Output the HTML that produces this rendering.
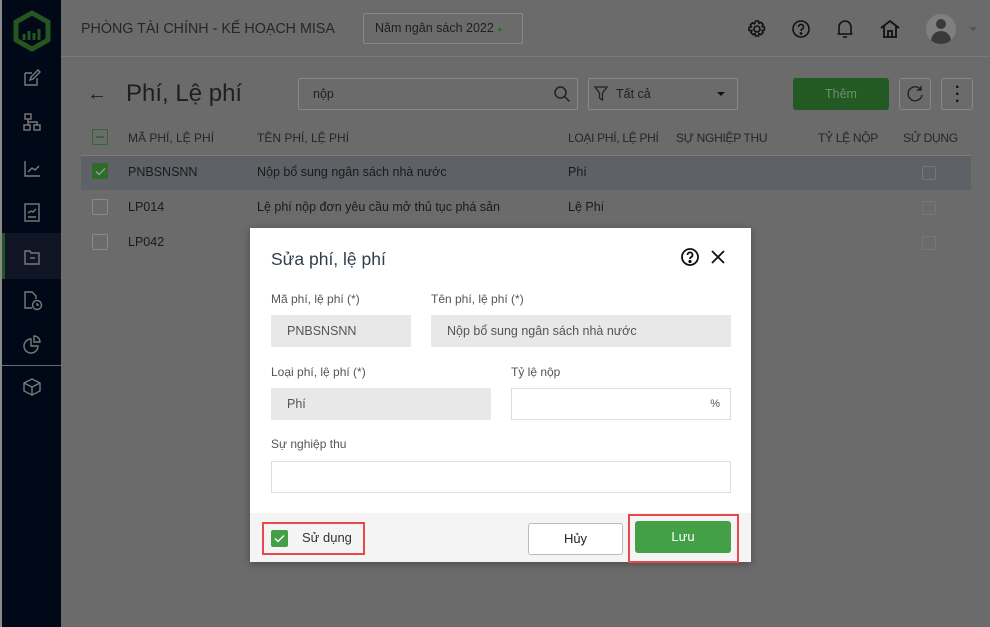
<!DOCTYPE html>
<html><head><meta charset="utf-8"><style>
*{margin:0;padding:0;box-sizing:border-box}
body{width:990px;height:627px;overflow:hidden;background:#6b6b6b;font-family:"Liberation Sans",Roboto,sans-serif;position:relative;color:#1f1f1f}
.abs{position:absolute}
.side{left:2px;top:0;width:59px;height:627px;background:#010818}
.ic{position:absolute;left:20px}
.hdr{left:61px;top:0;right:0;height:57px;border-bottom:1px solid #7a7a7a}
.t{position:absolute;white-space:nowrap}
.cb{position:absolute;width:16px;height:16px;border:1px solid #8a8a8a;border-radius:2px}
.th{font-size:12px;color:#262626}
.td{font-size:12.5px;color:#1a1a1a}
.dlg{left:250px;top:228px;width:501px;height:334px;background:#fff;box-shadow:0 2px 8px rgba(0,0,0,.3)}
.lbl{font-size:12px;color:#555}
.inp{position:absolute;height:32px;border:1px solid #ddd;font-size:12.5px;color:#555;padding-left:15px;line-height:30px}
.dis{background:#e8e8e8;border-color:#e8e8e8}
</style></head><body>
<div class="abs" style="left:0;top:0;width:2px;height:627px;background:#8a8a8a"></div>
<div class="abs side">
 <svg class="ic" style="left:9px;top:10px" width="42" height="42" viewBox="0 0 42 42"><path d="M21 3 L37 12 V30 L21 39 L5 30 V12 Z" fill="none" stroke="#24561f" stroke-width="5"/><path d="M13 30v-6M18 30v-9M23 30v-7M28 30v-11" stroke="#24561f" stroke-width="3"/></svg>
 <svg class="ic" style="top:68px" width="20" height="20" fill="none" stroke="#7a7a7a" stroke-width="1.4"><path d="M3 5h7M3 5v12h12v-7"/><path d="M8 12l1-3 7-7 2 2-7 7z"/></svg>
 <svg class="ic" style="top:112px" width="20" height="20" fill="none" stroke="#7a7a7a" stroke-width="1.4"><rect x="3" y="2" width="6" height="5"/><rect x="2" y="13" width="6" height="5"/><rect x="12" y="13" width="6" height="5"/><path d="M6 7v3h9v3M6 10v3"/></svg>
 <svg class="ic" style="top:158px" width="20" height="20" fill="none" stroke="#7a7a7a" stroke-width="1.4"><path d="M3 3v15h15M6 14l4-4 3 2 4-4"/></svg>
 <svg class="ic" style="top:202px" width="20" height="20" fill="none" stroke="#7a7a7a" stroke-width="1.4"><rect x="3" y="2" width="14" height="17"/><path d="M6 11l3-2 2 1 3-3M6 15h8"/></svg>
 <div class="abs" style="left:0;top:233px;width:59px;height:46px;background:#0f1524;border-left:3px solid #24561f"></div>
 <svg class="ic" style="top:246px" width="20" height="20" fill="none" stroke="#7a7a7a" stroke-width="1.4"><path d="M3 5h5l1 2h8v11H3z"/><path d="M8 12h5"/></svg>
 <svg class="ic" style="top:290px" width="22" height="22" fill="none" stroke="#7a7a7a" stroke-width="1.4"><path d="M10 18H3V2h7l4 4v3"/><circle cx="15" cy="15" r="4.5"/><path d="M15 13v2h2"/></svg>
 <svg class="ic" style="top:334px" width="20" height="20" fill="none" stroke="#7a7a7a" stroke-width="1.4"><path d="M9 5a7 7 0 1 0 7 7H9z"/><path d="M12 2a6 6 0 0 1 6 6h-6z"/></svg>
 <div class="abs" style="left:0;top:365px;width:59px;height:1px;background:#6a6a6a"></div>
 <svg class="ic" style="top:377px" width="20" height="20" fill="none" stroke="#7a7a7a" stroke-width="1.4"><path d="M10 2l8 4v8l-8 4-8-4V6z M2 6l8 4 8-4M10 10v8"/></svg>
</div>
<div class="abs hdr">
 <div class="t" style="left:20px;top:21px;font-size:14.3px;color:#262626">PHÒNG TÀI CHÍNH - KẾ HOẠCH MISA</div>
 <div class="abs" style="left:302px;top:13px;width:160px;height:31px;border:1px solid #888;border-radius:2px"></div>
 <div class="t" style="left:314px;top:21px;font-size:12.5px;color:#1f1f1f">Năm ngân sách 2022 <span style="color:#2f6b2a;font-size:8px">●</span></div>
 <svg class="abs" style="left:686px;top:19px" width="20" height="20" fill="none" stroke="#111" stroke-width="1.6"><circle cx="10" cy="10" r="3"/><path d="M8.5 2h3l.5 2.3 2-1 2.1 2.1-1 2 2.3.6v3l-2.3.5 1 2-2.1 2.1-2-1-.5 2.4h-3l-.5-2.4-2 1-2.1-2.1 1-2L2 11.5v-3l2.4-.6-1-2 2.1-2.1 2 1z"/></svg>
 <svg class="abs" style="left:730px;top:19px" width="20" height="20" fill="none" stroke="#111" stroke-width="1.6"><circle cx="10" cy="10" r="8"/><path d="M7.5 8a2.5 2.5 0 1 1 3.5 2.2c-.8.4-1 .9-1 1.8"/><circle cx="10" cy="14.5" r=".6" fill="#111"/></svg>
 <svg class="abs" style="left:774px;top:18px" width="20" height="22" fill="none" stroke="#111" stroke-width="1.6"><path d="M4 16V9a6 6 0 0 1 12 0v7zM2.5 16h15M8 19h4"/></svg>
 <svg class="abs" style="left:818px;top:18px" width="22" height="22" fill="none" stroke="#111" stroke-width="1.8"><path d="M2 10L11 3l9 7M5 8v11h12V8M9 19v-6h4v6"/></svg>
 <div class="abs" style="left:865px;top:14px;width:30px;height:30px;border-radius:50%;background:#7f7f7f;overflow:hidden"><div class="abs" style="left:10px;top:5px;width:10px;height:10px;border-radius:50%;background:#3a3a3a"></div><div class="abs" style="left:5px;top:17px;width:20px;height:14px;border-radius:10px 10px 0 0;background:#3a3a3a"></div></div>
 <div class="abs" style="left:908px;top:27px;border:4px solid transparent;border-top-color:#555"></div>
</div>
<div class="t" style="left:87px;top:83px;font-size:20px;color:#222">←</div>
<div class="t" style="left:126px;top:80px;font-size:24px;color:#1f1f1f">Phí, Lệ phí</div>
<div class="abs" style="left:298px;top:78px;width:280px;height:32px;border:1px solid #888;border-radius:2px"></div>
<div class="t" style="left:313px;top:87px;font-size:12.5px;color:#1f1f1f">nộp</div>
<svg class="abs" style="left:553px;top:85px" width="18" height="18" fill="none" stroke="#222" stroke-width="1.5"><circle cx="7.5" cy="7.5" r="5.5"/><path d="M11.5 11.5l5 5"/></svg>
<div class="abs" style="left:588px;top:78px;width:150px;height:32px;border:1px solid #888;border-radius:2px"></div>
<svg class="abs" style="left:594px;top:86px" width="14" height="16" fill="none" stroke="#222" stroke-width="1.3"><path d="M1 1h12L8.5 7v7L5.5 12V7z"/></svg>
<div class="t" style="left:616px;top:87px;font-size:12.5px;color:#1f1f1f">Tất cả</div>
<div class="abs" style="left:717px;top:92px;border:4px solid transparent;border-top-color:#111"></div>
<div class="abs" style="left:793px;top:78px;width:96px;height:32px;background:#235a23;border-radius:3px;color:#6f8e6f;font-size:12.5px;text-align:center;line-height:32px">Thêm</div>
<div class="abs" style="left:899px;top:78px;width:32px;height:32px;border:1px solid #888;border-radius:3px"></div>
<svg class="abs" style="left:905px;top:84px" width="20" height="20" fill="none" stroke="#222" stroke-width="1.4"><path d="M16 6A7 7 0 1 0 17 11M16 2v4h-4"/></svg>
<div class="abs" style="left:941px;top:78px;width:32px;height:32px;border:1px solid #888;border-radius:3px"></div>
<div class="t" style="left:955px;top:84px;font-size:16px;font-weight:bold;line-height:7px;color:#111">·<br>·<br>·</div>
<div class="cb" style="left:92px;top:129px;border-color:#2f6b2a"><div class="abs" style="left:3px;top:6px;width:8px;height:1.5px;background:#2f6b2a"></div></div>
<div class="t th" style="left:128px;top:131px">MÃ PHÍ, LỆ PHÍ</div>
<div class="t th" style="left:257px;top:131px">TÊN PHÍ, LỆ PHÍ</div>
<div class="t th" style="left:568px;top:131px;letter-spacing:-.3px">LOẠI PHÍ, LỆ PHÍ</div>
<div class="t th" style="left:676px;top:131px;letter-spacing:-.3px">SỰ NGHIỆP THU</div>
<div class="t th" style="left:818px;top:131px;letter-spacing:-.3px">TỶ LỆ NỘP</div>
<div class="t th" style="left:903px;top:131px;letter-spacing:-.3px">SỬ DỤNG</div>
<div class="abs" style="left:81px;top:155px;width:890px;height:1px;background:#7c7c7c"></div>
<div class="abs" style="left:81px;top:156px;width:890px;height:34px;background:#5e6266"></div>
<div class="cb" style="left:92px;top:163px;background:#2f6b2a;border-color:#2f6b2a"><svg class="abs" style="left:2px;top:2px" width="11" height="11" fill="none" stroke="#8aa88a" stroke-width="1.3"><path d="M1 5.5l3 3 6-6"/></svg></div>
<div class="t td" style="left:128px;top:165px">PNBSNSNN</div>
<div class="t td" style="left:257px;top:165px">Nộp bổ sung ngân sách nhà nước</div>
<div class="t td" style="left:568px;top:165px">Phí</div>
<div class="cb" style="left:922px;top:166px;width:14px;height:14px;border-color:#777"></div>
<div class="cb" style="left:92px;top:199px"></div>
<div class="t td" style="left:128px;top:200px">LP014</div>
<div class="t td" style="left:257px;top:200px">Lệ phí nộp đơn yêu cầu mở thủ tục phá sản</div>
<div class="t td" style="left:568px;top:200px">Lệ Phí</div>
<div class="cb" style="left:922px;top:201px;width:14px;height:14px;border-color:#777"></div>
<div class="cb" style="left:92px;top:234px"></div>
<div class="t td" style="left:128px;top:235px">LP042</div>
<div class="cb" style="left:922px;top:236px;width:14px;height:14px;border-color:#777"></div>

<div class="abs dlg">
 <div class="t" style="left:21px;top:21px;font-size:17.5px;color:#333d4a">Sửa phí, lệ phí</div>
 <svg class="abs" style="left:430px;top:19px" width="20" height="20" fill="none" stroke="#111" stroke-width="1.8"><circle cx="10" cy="10" r="8"/><path d="M7.5 8a2.5 2.5 0 1 1 3.5 2.2c-.8.4-1 .9-1 1.8"/><circle cx="10" cy="14.5" r=".7" fill="#111"/></svg>
 <svg class="abs" style="left:460px;top:21px" width="16" height="16" stroke="#111" stroke-width="1.8"><path d="M2 2l12 12M14 2L2 14"/></svg>
 <div class="t lbl" style="left:21px;top:64px">Mã phí, lệ phí (*)</div>
 <div class="t lbl" style="left:181px;top:64px">Tên phí, lệ phí (*)</div>
 <div class="inp dis" style="left:21px;top:87px;width:140px">PNBSNSNN</div>
 <div class="inp dis" style="left:181px;top:87px;width:300px">Nộp bổ sung ngân sách nhà nước</div>
 <div class="t lbl" style="left:21px;top:137px">Loại phí, lệ phí (*)</div>
 <div class="t lbl" style="left:261px;top:137px">Tỷ lệ nộp</div>
 <div class="inp dis" style="left:21px;top:160px;width:220px">Phí</div>
 <div class="inp" style="left:261px;top:160px;width:220px;text-align:right;padding-right:10px;font-size:11px">%</div>
 <div class="t lbl" style="left:21px;top:209px">Sự nghiệp thu</div>
 <div class="inp" style="left:21px;top:233px;width:460px"></div>
 <div class="abs" style="left:0;top:285px;width:501px;height:49px;background:#f4f4f4">
  <div class="abs" style="left:12px;top:9px;width:103px;height:33px;border:2px solid #e8474b"></div>
  <div class="abs" style="left:21px;top:17px;width:17px;height:17px;background:#43a047;border-radius:2px"><svg class="abs" style="left:3px;top:3px" width="11" height="11" fill="none" stroke="#fff" stroke-width="1.3"><path d="M1 5.5l3 3 6-6"/></svg></div>
  <div class="t" style="left:52px;top:17px;font-size:13px;color:#333">Sử dụng</div>
  <div class="abs" style="left:278px;top:10px;width:95px;height:32px;border:1px solid #bbb;border-radius:3px;background:#fff;text-align:center;line-height:30px;font-size:13px;color:#222">Hủy</div>
  <div class="abs" style="left:378px;top:1px;width:111px;height:49px;border:2px solid #e8474b"></div>
  <div class="abs" style="left:385px;top:8px;width:96px;height:32px;background:#43a047;border-radius:3px;text-align:center;line-height:32px;font-size:13px;color:#fff">Lưu</div>
 </div>
</div>
</body></html>
